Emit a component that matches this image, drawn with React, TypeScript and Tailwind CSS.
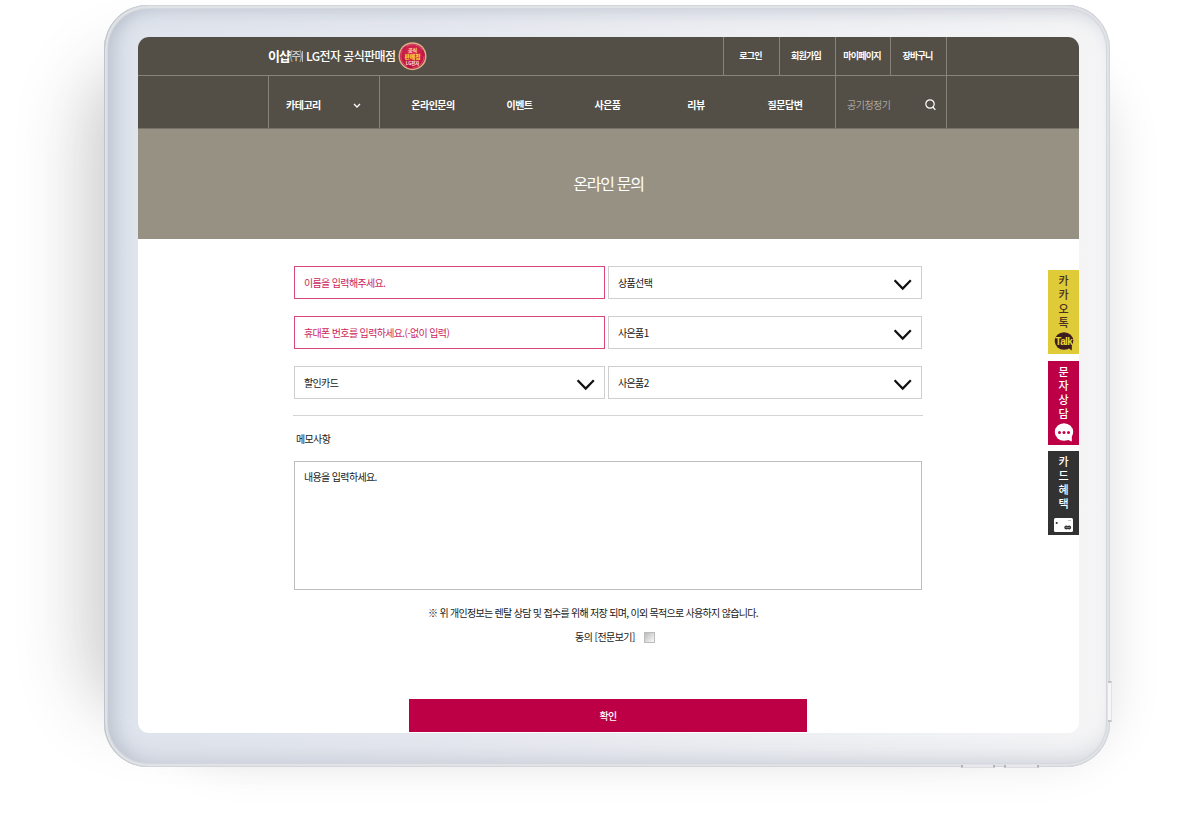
import type { ReactNode } from "react";

const NAV = [
  { label: "온라인문의", width: "w-[88px]" },
  { label: "이벤트", width: "w-[85px]" },
  { label: "사은품", width: "w-[91px]" },
  { label: "리뷰", width: "w-[86px]" },
  { label: "질문답변", width: "w-[92px]" },
];

function Chevron() {
  return (
    <svg width="18" height="12" viewBox="0 0 18 12" fill="none" stroke="#111" strokeWidth="2.2">
      <path d="M.6 1.2 8.7 9.6 16.8 1.2" />
    </svg>
  );
}

function TextField({ children }: { children: ReactNode }) {
  return (
    <div className="flex h-[33px] items-center border border-[#d8467c] pl-[9px] text-[#cc1f5c]">{children}</div>
  );
}

function SelectField({ label }: { label: string }) {
  return (
    <div className="flex h-[33px] items-center justify-between border border-[#cfcfcf] pr-[9px] pl-[9px]">
      <span>{label}</span>
      <span className="pt-[5px]">
        <Chevron />
      </span>
    </div>
  );
}

function Badge() {
  return (
    <svg width="29" height="29" viewBox="0 0 29 29" className="ml-[2px] block">
      <defs>
        <radialGradient id="seal" cx="50%" cy="40%" r="60%">
          <stop offset="0" stopColor="#e2335c" />
          <stop offset="1" stopColor="#b80f3a" />
        </radialGradient>
      </defs>
      <circle cx="14.5" cy="14.2" r="14" fill="#dcb088" />
      <circle cx="14.5" cy="14.2" r="12.5" fill="url(#seal)" />
      <circle cx="14.5" cy="14.2" r="11.6" fill="none" stroke="#ee8b9a" strokeWidth=".5" strokeDasharray="18 6" />
      <g textAnchor="middle" fontWeight="700" letterSpacing="0">
        <text x="14.5" y="10.4" fontSize="5" fill="#ffe9a8">공식</text>
        <text x="14.5" y="17" fontSize="5.8" fill="#ffe52e">판매점</text>
        <text x="14.5" y="23.2" fontSize="4.3" fill="#ffe3e3">LG전자</text>
      </g>
    </svg>
  );
}

function SideTab({ label, className, children }: { label: string; className: string; children: ReactNode }) {
  return (
    <div className={`flex h-[84px] w-[31px] flex-col items-center justify-between pt-[3px] pb-[3px] text-[11px] leading-[14px] font-medium ${className}`}>
      <div className="flex flex-col items-center">
        {[...label].map((c, i) => (
          <span key={i}>{c}</span>
        ))}
      </div>
      {children}
    </div>
  );
}

export default function App() {
  return (
    <div
      lang="ko"
      className="relative h-[836px] w-[1200px] overflow-hidden bg-white pt-[5px] pl-[104px] font-['Noto_Sans_CJK_KR',sans-serif] whitespace-nowrap"
    >
      <div className="absolute top-[60px] left-[104px] h-[650px] w-[900px] rounded-[60px] shadow-[-18px_4px_68px_rgba(50,50,50,0.25)]" />
      <div className="absolute top-[70px] left-[170px] h-[680px] w-[940px] rounded-[60px] shadow-[0_6px_52px_rgba(0,0,0,0.13)]" />

      <div className="relative h-[762px] w-[1006px] rounded-[44px] bg-[linear-gradient(90deg,#dfe4ed_0%,#e4e7ee_30%,#edeff3_65%,#f5f5f6_100%)] px-[34px] pt-[32px] shadow-[inset_1px_0_0_0_#bcc4cd,inset_0_0_0_1px_#d2d5da,inset_0_0_0_3px_#e0e2e6,inset_0_0_0_4px_#d4d7dd,inset_18px_0_18px_-6px_rgba(165,175,188,0.5),inset_0_16px_16px_-8px_rgba(180,188,204,0.5),inset_0_-20px_18px_-8px_rgba(195,200,212,0.5)]">
        <div className="relative h-[696px] w-[941px] overflow-hidden rounded-[11px] bg-white">
          <header className="bg-[#534f47] text-white">
            <div className="flex h-[39px] justify-between border-b border-[#87837b] pr-[132px] pl-[130px]">
              <div className="flex items-center">
                <div className="flex items-center text-[12px] tracking-[-0.65px]">
                  <b className="text-[13px] tracking-[-1px]">이샵</b>
                  <span className="text-[12px] tracking-normal text-[#ddd]">㈜</span>
                  <span className="mr-[3px] h-[11px] w-px bg-[#bbb]" />
                  <span className="font-medium tracking-[-0.58px]">LG전자 공식판매점</span>
                </div>
                <Badge />
              </div>
              <div className="flex text-[9px] font-bold tracking-[-0.75px]">
                <span className="flex w-[56px] items-center justify-center border-l border-[#87837b] pr-[2px]">로그인</span>
                <span className="flex w-[56px] items-center justify-center border-l border-[#87837b] pr-[3px]">회원가입</span>
                <span className="flex w-[55px] items-center justify-center border-l border-[#87837b] pr-[2px]">마이페이지</span>
                <span className="flex w-[57px] items-center justify-center border-x border-[#87837b] pr-[2px]">장바구니</span>
              </div>
            </div>
            <div className="flex h-[53px] border-b border-[#77736a] pl-[130px] text-[10px] font-bold tracking-[-0.5px]">
              <div className="flex w-[112px] items-center justify-between border-x border-[#87837b] pt-[4px] pr-[18px] pl-[17px]">
                카테고리
                <svg width="8" height="6" viewBox="0 0 8 6" fill="none" stroke="#fff" strokeWidth="1.3" className="mt-[3px]">
                  <path d="M1 1l3 3 3-3" />
                </svg>
              </div>
              <nav className="flex w-[455px] pt-[4px] pl-[9px]">
                {NAV.map((n) => (
                  <span key={n.label} className={`flex items-center justify-center ${n.width}`}>
                    {n.label}
                  </span>
                ))}
              </nav>
              <div className="flex w-[112px] items-center justify-between border-x border-[#87837b] pt-[4px] pr-[10px] pl-[11px] font-normal text-[#aaa69f]">
                공기청정기
                <svg width="11" height="12" viewBox="0 0 11 12" fill="none" stroke="#fff" strokeWidth="1.2" className="mt-[2px]">
                  <circle cx="5" cy="5" r="4.2" />
                  <path d="M7.8 8l2.6 2.8" />
                </svg>
              </div>
            </div>
          </header>

          <div className="flex h-[110px] items-center justify-center bg-[#979184] pb-[2px] text-[16px] tracking-[-1.25px] text-white">
            온라인 문의
          </div>

          <main className="pt-[27px] pl-[155px] text-[10px] tracking-[-0.65px] text-[#181818]">
            <div className="ml-px grid w-[628px] grid-cols-[311px_314px] gap-x-[3px] gap-y-[17px]">
              <TextField>이름을 입력해주세요.</TextField>
              <SelectField label="상품선택" />
              <TextField>휴대폰 번호를 입력하세요.(-없이 입력)</TextField>
              <SelectField label="사은품1" />
              <SelectField label="할인카드" />
              <SelectField label="사은품2" />
            </div>
            <div className="mt-[16px] h-px w-[630px] bg-[#d4d4d4]" />
            <div className="mt-[15px] ml-[3px] h-[16px] leading-[16px]">메모사항</div>
            <div className="mt-[14px] ml-px h-[129px] w-[628px] border border-[#bdbdbd] pt-[7px] pl-[9px] leading-[16px]">
              내용을 입력하세요.
            </div>
            <div className="mt-[15px] ml-[135px] h-[16px] leading-[16px] tracking-[-0.7px]">
              ※ 위 개인정보는 렌탈 상담 및 접수를 위해 저장 되며, 이외 목적으로 사용하지 않습니다.
            </div>
            <div className="mt-[8px] ml-[282px] flex h-[16px] items-center gap-[9px] leading-[16px] tracking-[-0.55px]">
              <span>동의 [전문보기]</span>
              <span className="size-[11px] border border-[#bbb] bg-linear-to-br from-[#bbb] to-[#fafafa]" />
            </div>
            <button className="mt-[54px] ml-[116px] flex h-[33px] w-[398px] items-center justify-center bg-[#bd0046] font-medium text-white">
              확인
            </button>
          </main>

          <aside className="absolute top-[233px] right-0 flex flex-col gap-[7px]">
            <SideTab label="카카오톡" className="bg-[#dfca38] text-[#4a3020]">
              <svg width="20" height="19" viewBox="0 0 20 19">
                <ellipse cx="10" cy="9" rx="9.3" ry="8.7" fill="#3b1c20" />
                <path d="M13 15l4.8 3.5V12z" fill="#3b1c20" />
                <text x="9.8" y="12.7" textAnchor="middle" fontSize="10" fontWeight="700" letterSpacing="-.6" fill="#edd52e" fontFamily="Liberation Sans">Talk</text>
              </svg>
            </SideTab>
            <SideTab label="문자상담" className="bg-[#bd0046] text-white">
              <svg width="20" height="19" viewBox="0 0 20 19">
                <ellipse cx="10" cy="9" rx="9.2" ry="8.8" fill="#fff" />
                <path d="M12 16l5.8 2.6V12z" fill="#fff" />
                <g fill="#bd0046">
                  <circle cx="5.5" cy="9.5" r="1.5" />
                  <circle cx="10" cy="9.5" r="1.5" />
                  <circle cx="14.5" cy="9.5" r="1.5" />
                </g>
              </svg>
            </SideTab>
            <SideTab label="카드혜택" className="-mt-px bg-[#323232] text-white">
              <svg width="19" height="14" viewBox="0 0 19 14">
                <rect width="19" height="14" rx="1.5" fill="#fff" />
                <circle cx="2.7" cy="5" r="1.1" fill="#323232" />
                <path d="M14 2.5h3" stroke="#aaa" strokeWidth=".7" />
                <circle cx="12.3" cy="9.5" r="2" fill="#323232" />
                <circle cx="15.1" cy="9.5" r="2" fill="#323232" />
                <path d="M11.3 9.5h4.9" stroke="#aaa" strokeWidth=".6" />
              </svg>
            </SideTab>
          </aside>
        </div>
      </div>

      <div className="absolute top-[681px] left-[1108px] h-[41px] w-[4px] border-y-2 border-r border-y-[#c4c4c6] border-r-[#e2e2e4] bg-[#f6f6f7]" />
      <div className="absolute top-[765px] left-[961px] h-[3px] w-[34px] border-x-2 border-b border-x-[#b4b4b8] border-b-[#ddd] bg-[#e8e8ec]" />
      <div className="absolute top-[765px] left-[1004px] h-[3px] w-[35px] border-x-2 border-b border-x-[#b4b4b8] border-b-[#ddd] bg-[#e8e8ec]" />
    </div>
  );
}
